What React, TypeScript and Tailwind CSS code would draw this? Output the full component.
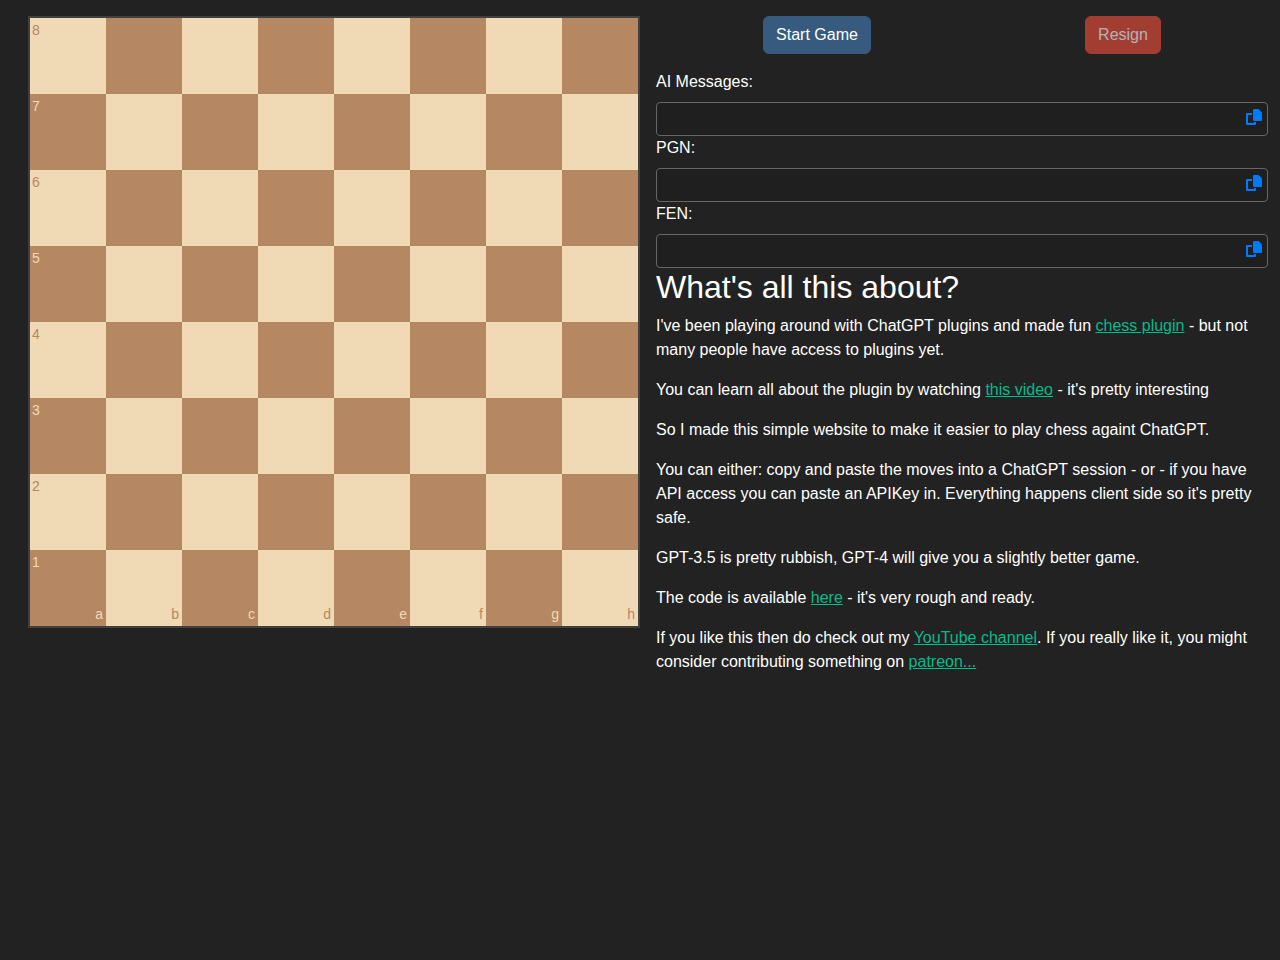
const files = ["a", "b", "c", "d", "e", "f", "g", "h"]
const ranks = [8, 7, 6, 5, 4, 3, 2, 1]

const Board = () => {
    return (
    <div className="grid grid-cols-8 border-2 border-[#404040] text-sm leading-5">
        {ranks.map((rank, row) => files.map((file, col) => (
            <div key={file + rank} className={(row + col) % 2 === 0
                ? "relative aspect-square bg-[#f0d9b5] text-[#b58863]"
                : "relative aspect-square bg-[#b58863] text-[#f0d9b5]"}>
                {col === 0 && <span className="absolute top-0.5 left-0.5">{rank}</span>}
                {row === 7 && <span className="absolute bottom-0.5 right-[3px]">{file}</span>}
            </div>
        )))}
    </div>
    )
}

const CopyIcon = () => (
    <svg viewBox="0 0 16 16" fill="currentColor" aria-hidden="true" className="size-4">
        <path d="M8 0H12.5L16 3.5V11Q16 12 15 12H8Q7 12 7 11V1Q7 0 8 0z" />
        <path d="M1 4H6V6H2V14H8V13H10V15Q10 16 9 16H1Q0 16 0 15V5Q0 4 1 4z" />
    </svg>
)

const CopyField = ({id, label}: {id: string, label: string}) => {
    return (
    <div>
        <label htmlFor={id} className="mb-2 block">{label}</label>
        <div className="relative">
            <input id={id} readOnly className="block h-[34px] w-full rounded-sm border border-[#666] bg-[#1f1f1f] pl-2 pr-8 text-white" />
            <button type="button" aria-label={`Copy ${label}`} className="absolute top-[7px] right-[6px] text-[#007bff]">
                <CopyIcon />
            </button>
        </div>
    </div>
    )
}

const TextLink = ({children}: {children: string}) => (
    <a href="#" className="text-[#00bc8c] underline">{children}</a>
)

const About = () => {
    return (
    <div>
        <h2 className="mb-2 text-[32px] leading-[38px]">What's all this about?</h2>
        <div className="space-y-4">
            <p>I've been playing around with ChatGPT plugins and made fun <TextLink>chess plugin</TextLink> - but not many people have access to plugins yet.</p>
            <p>You can learn all about the plugin by watching <TextLink>this video</TextLink> - it's pretty interesting</p>
            <p>So I made this simple website to make it easier to play chess againt ChatGPT.</p>
            <p>You can either: copy and paste the moves into a ChatGPT session - or - if you have API access you can paste an APIKey in. Everything happens client side so it's pretty safe.</p>
            <p>GPT-3.5 is pretty rubbish, GPT-4 will give you a slightly better game.</p>
            <p>The code is available <TextLink>here</TextLink> - it's very rough and ready.</p>
            <p>If you like this then do check out my <TextLink>YouTube channel</TextLink>. If you really like it, you might consider contributing something on <TextLink>patreon...</TextLink></p>
        </div>
    </div>
    )
}

const App = () => {
    return (
    <main className="min-h-screen bg-[#222] pt-4 pr-3 pl-7 font-['Liberation_Sans',sans-serif] text-base text-white">
        <div className="grid grid-cols-1 items-start gap-4 md:grid-cols-2">
            <Board />
            <div>
                <div className="mb-4 flex justify-around">
                    <button type="button" className="rounded-md border border-[#375a7f] bg-[#375a7f] px-3 py-1.5">Start Game</button>
                    <button type="button" disabled className="rounded-md border border-[#e74c3c] bg-[#e74c3c] px-3 py-1.5 opacity-65">Resign</button>
                </div>
                <CopyField id="messages" label="AI Messages:" />
                <CopyField id="pgn" label="PGN:" />
                <CopyField id="fen" label="FEN:" />
                <About />
            </div>
        </div>
    </main>
    )
}

export default App
